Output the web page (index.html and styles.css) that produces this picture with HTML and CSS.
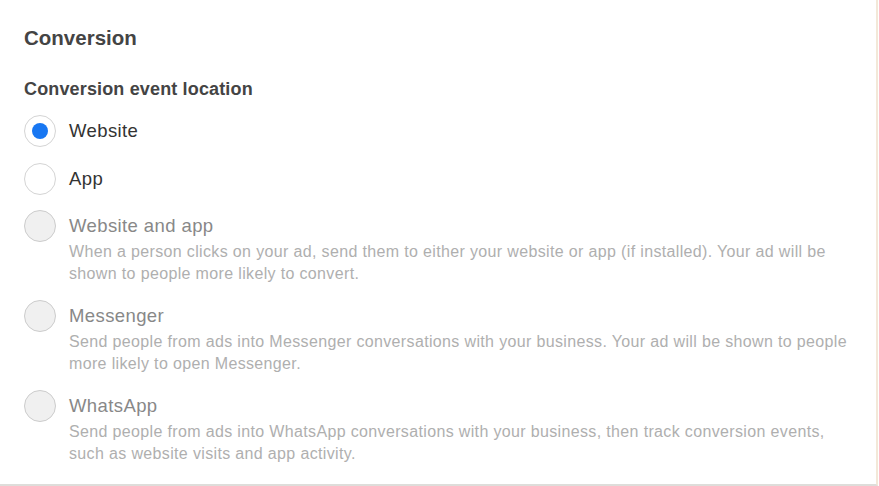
FILE: index.html
```html
<html lang="en">
<head>
    <meta charset="UTF-8">
    <meta name="viewport" content="width=device-width, initial-scale=1.0">
    <title>Conversion</title>
    <link rel="stylesheet" href="styles.css">
</head>
<body>
    <div class="card">
        <h2 class="title">Conversion</h2>
        <h3 class="subtitle">Conversion event location</h3>

        <div class="options">
            <div class="option">
                <span class="radio checked"></span>
                <div class="option-text">
                    <div class="label">Website</div>
                </div>
            </div>
            <div class="option">
                <span class="radio"></span>
                <div class="option-text">
                    <div class="label">App</div>
                </div>
            </div>
            <div class="option disabled">
                <span class="radio"></span>
                <div class="option-text">
                    <div class="label">Website and app</div>
                    <p class="desc">When a person clicks on your ad, send them to either your website or app (if installed). Your ad will be shown to people more likely to convert.</p>
                </div>
            </div>
            <div class="option disabled">
                <span class="radio"></span>
                <div class="option-text">
                    <div class="label">Messenger</div>
                    <p class="desc">Send people from ads into Messenger conversations with your business. Your ad will be shown to people more likely to open Messenger.</p>
                </div>
            </div>
            <div class="option disabled">
                <span class="radio"></span>
                <div class="option-text">
                    <div class="label">WhatsApp</div>
                    <p class="desc">Send people from ads into WhatsApp conversations with your business, then track conversion events, such as website visits and app activity.</p>
                </div>
            </div>
        </div>
    </div>
</body>
</html>
```

FILE: styles.css
```css
* {
    margin: 0;
    padding: 0;
    box-sizing: border-box;
}

body {
    background-color: #fff;
    font-family: 'Liberation Sans', Arial, sans-serif;
    color: #444;
}

.card {
    width: 878px;
    height: 486px;
    padding: 26px 24px 0 24px;
    border-right: 2px solid #f3e8d8;
    border-bottom: 2px solid #deddda;
}

.title {
    font-size: 20.5px;
    line-height: 24px;
    font-weight: 700;
    color: #444;
}

.subtitle {
    margin-top: 28px;
    font-size: 18px;
    line-height: 22px;
    font-weight: 700;
    letter-spacing: 0.15px;
    color: #444;
}

.options {
    margin-top: 15px;
    display: flex;
    flex-direction: column;
    gap: 15px;
}

.option {
    display: flex;
    gap: 13px;
}

.option:first-child {
    margin-bottom: 1px;
}

.radio {
    flex: none;
    width: 32px;
    height: 32px;
    border-radius: 50%;
    border: 1px solid #d4d4d4;
    background-color: #fff;
    display: flex;
    align-items: center;
    justify-content: center;
}

.radio.checked::after {
    content: '';
    width: 16px;
    height: 16px;
    border-radius: 50%;
    background-color: #1877f2;
}

.label {
    font-size: 18.5px;
    line-height: 32px;
    letter-spacing: 0.4px;
    color: #333;
}

.desc {
    margin-top: -1px;
    font-size: 16px;
    line-height: 22px;
    letter-spacing: 0.35px;
    color: #afafaf;
    max-width: 785px;
}

.disabled .radio {
    background-color: #f0f0f0;
    border-color: #ccc;
}

.disabled .label {
    color: #888;
}
```
